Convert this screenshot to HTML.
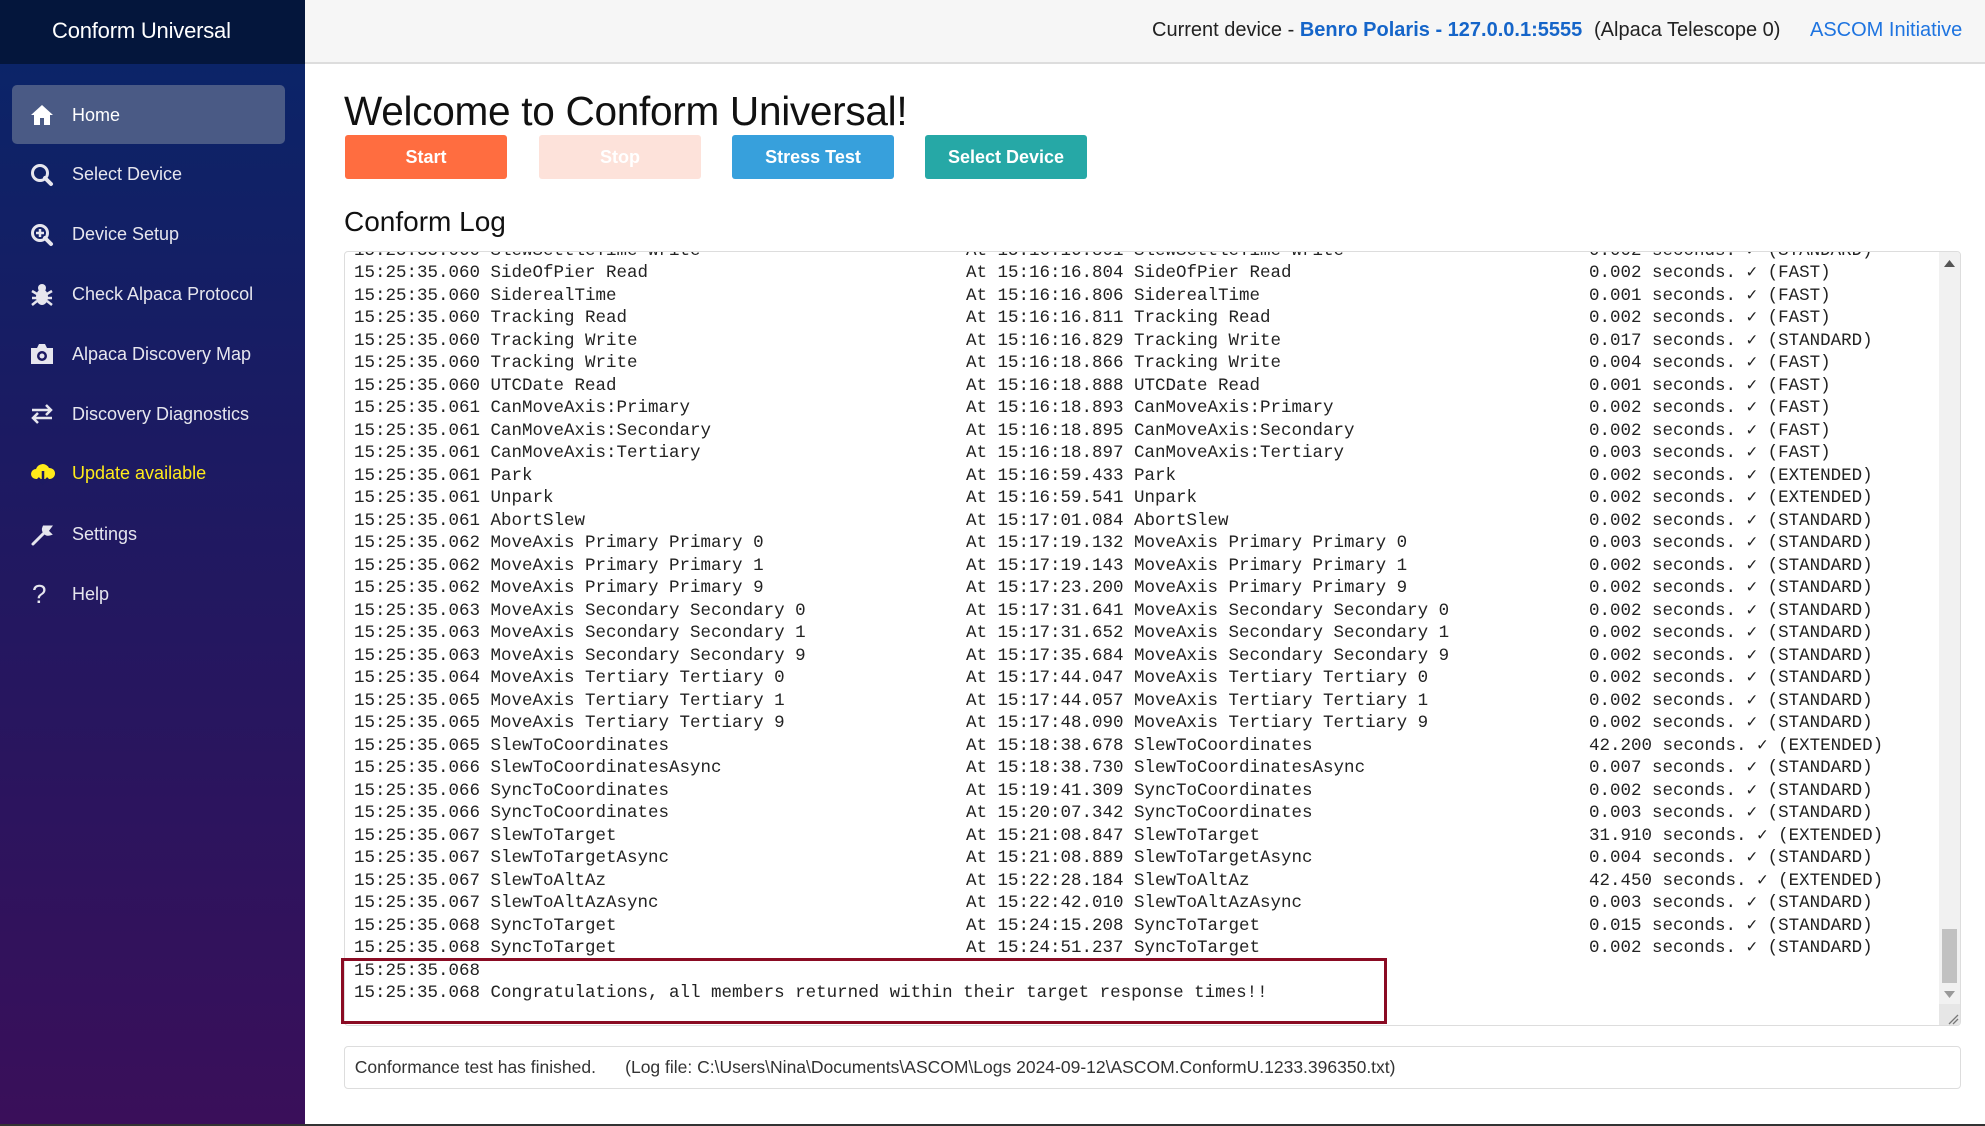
<!DOCTYPE html>
<html><head><meta charset="utf-8"><style>
*{margin:0;padding:0;box-sizing:border-box}
body{width:1985px;height:1126px;overflow:hidden;background:#fff;font-family:"Liberation Sans",Arial,sans-serif;position:relative}
#side{position:absolute;left:0;top:0;width:305px;height:1126px;background:linear-gradient(180deg,#0b2468 64px,#1c1a62 450px,#3a0f5a 1126px)}
#brand{height:64px;background:#04163c;color:#fff;font-size:22px;line-height:62px;padding-left:52px;letter-spacing:-0.2px}
.nav{position:absolute;left:12px;width:273px;height:59px;color:#e6e6ee;font-size:18px;line-height:61px;padding-left:60px;border-radius:5px}
.nav.act{background:#4a5a85;color:#fff}
.nav svg{position:absolute;left:18px;top:19px}
#hdr{position:absolute;left:305px;top:0;width:1680px;height:64px;background:#f6f6f6;border-bottom:2px solid #ddd;font-size:20px;color:#222}
#hdr span{position:absolute;top:19px;white-space:nowrap}
h1{position:absolute;left:344px;top:88px;font-size:40.6px;font-weight:normal;color:#111;letter-spacing:-0.3px}
.btn{position:absolute;top:135px;height:44px;width:162px;border-radius:3px;color:#fff;font-weight:bold;font-size:18px;text-align:center;line-height:44px}
h2{position:absolute;left:344px;top:206px;font-size:28px;font-weight:normal;color:#111}
#log{position:absolute;left:344px;top:251px;width:1617px;height:775px;border:1px solid #ddd;border-radius:4px;overflow:hidden;background:#fff}
#lines{position:absolute;left:0;top:-12px;font-family:"Liberation Mono",monospace;font-size:17.5px;color:#222}
.l{position:relative;height:22.49px;line-height:22.49px;white-space:pre}
.l span{position:absolute;top:0}
.a{left:9px}.b{left:621px}.c{left:1244px}
#sb{position:absolute;right:0;top:0;width:21px;height:775px;background:#f1f1f1}
#thumb{position:absolute;left:3px;top:677px;width:15px;height:54px;background:#c1c1c1}
#red{position:absolute;left:341px;top:958px;width:1046px;height:66px;border:3px solid #8a0b23}
#stat{position:absolute;left:344px;top:1046px;width:1617px;height:43px;border:1px solid #ddd;border-radius:4px;font-size:17.5px;color:#333;line-height:41px;white-space:pre}
</style></head><body>
<div id="side">
<div id="brand">Conform Universal</div>
<div class="nav act" style="top:85px"><svg width="24" height="22" viewBox="0 0 24 22"><path d="M12 1 L1 11 H4 V21 H10 V14 H14 V21 H20 V11 H23 Z" fill="#fff"/></svg>Home</div>
<div class="nav" style="top:144px"><svg width="24" height="24" viewBox="0 0 24 24"><circle cx="10" cy="10" r="7.5" stroke="#e6e6ee" stroke-width="3" fill="none"/><path d="M15 15 L21 21" stroke="#e6e6ee" stroke-width="4" stroke-linecap="round"/></svg>Select Device</div>
<div class="nav" style="top:204px"><svg width="24" height="24" viewBox="0 0 24 24"><circle cx="10" cy="10" r="7.5" stroke="#e6e6ee" stroke-width="3" fill="none"/><path d="M15 15 L21 21" stroke="#e6e6ee" stroke-width="4" stroke-linecap="round"/><path d="M10 6V14M6 10H14" stroke="#e6e6ee" stroke-width="2.5"/></svg>Device Setup</div>
<div class="nav" style="top:264px"><svg width="24" height="24" viewBox="0 0 24 24"><ellipse cx="12" cy="14" rx="6" ry="8" fill="#e6e6ee"/><circle cx="12" cy="5" r="4" fill="#e6e6ee"/><path d="M2 8L7 11M2 15H7M2 22L7 18M22 8L17 11M22 15H17M22 22L17 18" stroke="#e6e6ee" stroke-width="2.5"/></svg>Check Alpaca Protocol</div>
<div class="nav" style="top:324px"><svg width="24" height="22" viewBox="0 0 24 22"><path d="M1 5H7L9 1H15L17 5H23V21H1Z" fill="#e6e6ee"/><circle cx="12" cy="13" r="5" fill="#1c1a62"/><circle cx="12" cy="13" r="2.5" fill="#e6e6ee"/></svg>Alpaca Discovery Map</div>
<div class="nav" style="top:384px"><svg width="24" height="22" viewBox="0 0 24 22"><path d="M2 7H20M16 2L21 7L16 12M22 15H4M8 10L3 15L8 20" stroke="#e6e6ee" stroke-width="2.5" fill="none"/></svg>Discovery Diagnostics</div>
<div class="nav" style="top:443px;color:#ffeb1a"><svg width="26" height="24" viewBox="0 0 26 24"><path d="M6 17A5 5 0 0 1 6 7A7 7 0 0 1 19 6A5.5 5.5 0 0 1 20 17Z" fill="#ffeb1a"/><path d="M13 9V20M8 16L13 21L18 16" stroke="#1c1a62" stroke-width="2.5" fill="none"/></svg>Update available</div>
<div class="nav" style="top:504px"><svg width="24" height="24" viewBox="0 0 24 24"><path d="M3 21L13 11M14 4A5 5 0 0 0 20 11L17 8L20 4Z" stroke="#e6e6ee" stroke-width="3" fill="#e6e6ee" stroke-linecap="round"/></svg>Settings</div>
<div class="nav" style="top:564px"><span style="position:absolute;left:20px;top:0;font-size:26px;color:#e6e6ee">?</span>Help</div>
</div>
<div id="hdr">
<span style="left:847px">Current device - <b style="color:#1565c9">Benro Polaris - 127.0.0.1:5555</b></span>
<span style="left:1289px">(Alpaca Telescope 0)</span>
<span style="left:1505px;color:#1e74e0">ASCOM Initiative</span>
</div>
<h1>Welcome to Conform Universal!</h1>
<div class="btn" style="left:345px;background:#ff6d40">Start</div>
<div class="btn" style="left:539px;background:#fde2da">Stop</div>
<div class="btn" style="left:732px;background:#37a0dc">Stress Test</div>
<div class="btn" style="left:925px;background:#26a8a6">Select Device</div>
<h2>Conform Log</h2>
<div id="log"><div id="lines">
<div class="l"><span class="a">15:25:35.060 SlewSettleTime Write</span><span class="b">At 15:16:16.801 SlewSettleTime Write</span><span class="c">0.002 seconds. ✓ (STANDARD)</span></div>
<div class="l"><span class="a">15:25:35.060 SideOfPier Read</span><span class="b">At 15:16:16.804 SideOfPier Read</span><span class="c">0.002 seconds. ✓ (FAST)</span></div>
<div class="l"><span class="a">15:25:35.060 SiderealTime</span><span class="b">At 15:16:16.806 SiderealTime</span><span class="c">0.001 seconds. ✓ (FAST)</span></div>
<div class="l"><span class="a">15:25:35.060 Tracking Read</span><span class="b">At 15:16:16.811 Tracking Read</span><span class="c">0.002 seconds. ✓ (FAST)</span></div>
<div class="l"><span class="a">15:25:35.060 Tracking Write</span><span class="b">At 15:16:16.829 Tracking Write</span><span class="c">0.017 seconds. ✓ (STANDARD)</span></div>
<div class="l"><span class="a">15:25:35.060 Tracking Write</span><span class="b">At 15:16:18.866 Tracking Write</span><span class="c">0.004 seconds. ✓ (FAST)</span></div>
<div class="l"><span class="a">15:25:35.060 UTCDate Read</span><span class="b">At 15:16:18.888 UTCDate Read</span><span class="c">0.001 seconds. ✓ (FAST)</span></div>
<div class="l"><span class="a">15:25:35.061 CanMoveAxis:Primary</span><span class="b">At 15:16:18.893 CanMoveAxis:Primary</span><span class="c">0.002 seconds. ✓ (FAST)</span></div>
<div class="l"><span class="a">15:25:35.061 CanMoveAxis:Secondary</span><span class="b">At 15:16:18.895 CanMoveAxis:Secondary</span><span class="c">0.002 seconds. ✓ (FAST)</span></div>
<div class="l"><span class="a">15:25:35.061 CanMoveAxis:Tertiary</span><span class="b">At 15:16:18.897 CanMoveAxis:Tertiary</span><span class="c">0.003 seconds. ✓ (FAST)</span></div>
<div class="l"><span class="a">15:25:35.061 Park</span><span class="b">At 15:16:59.433 Park</span><span class="c">0.002 seconds. ✓ (EXTENDED)</span></div>
<div class="l"><span class="a">15:25:35.061 Unpark</span><span class="b">At 15:16:59.541 Unpark</span><span class="c">0.002 seconds. ✓ (EXTENDED)</span></div>
<div class="l"><span class="a">15:25:35.061 AbortSlew</span><span class="b">At 15:17:01.084 AbortSlew</span><span class="c">0.002 seconds. ✓ (STANDARD)</span></div>
<div class="l"><span class="a">15:25:35.062 MoveAxis Primary Primary 0</span><span class="b">At 15:17:19.132 MoveAxis Primary Primary 0</span><span class="c">0.003 seconds. ✓ (STANDARD)</span></div>
<div class="l"><span class="a">15:25:35.062 MoveAxis Primary Primary 1</span><span class="b">At 15:17:19.143 MoveAxis Primary Primary 1</span><span class="c">0.002 seconds. ✓ (STANDARD)</span></div>
<div class="l"><span class="a">15:25:35.062 MoveAxis Primary Primary 9</span><span class="b">At 15:17:23.200 MoveAxis Primary Primary 9</span><span class="c">0.002 seconds. ✓ (STANDARD)</span></div>
<div class="l"><span class="a">15:25:35.063 MoveAxis Secondary Secondary 0</span><span class="b">At 15:17:31.641 MoveAxis Secondary Secondary 0</span><span class="c">0.002 seconds. ✓ (STANDARD)</span></div>
<div class="l"><span class="a">15:25:35.063 MoveAxis Secondary Secondary 1</span><span class="b">At 15:17:31.652 MoveAxis Secondary Secondary 1</span><span class="c">0.002 seconds. ✓ (STANDARD)</span></div>
<div class="l"><span class="a">15:25:35.063 MoveAxis Secondary Secondary 9</span><span class="b">At 15:17:35.684 MoveAxis Secondary Secondary 9</span><span class="c">0.002 seconds. ✓ (STANDARD)</span></div>
<div class="l"><span class="a">15:25:35.064 MoveAxis Tertiary Tertiary 0</span><span class="b">At 15:17:44.047 MoveAxis Tertiary Tertiary 0</span><span class="c">0.002 seconds. ✓ (STANDARD)</span></div>
<div class="l"><span class="a">15:25:35.065 MoveAxis Tertiary Tertiary 1</span><span class="b">At 15:17:44.057 MoveAxis Tertiary Tertiary 1</span><span class="c">0.002 seconds. ✓ (STANDARD)</span></div>
<div class="l"><span class="a">15:25:35.065 MoveAxis Tertiary Tertiary 9</span><span class="b">At 15:17:48.090 MoveAxis Tertiary Tertiary 9</span><span class="c">0.002 seconds. ✓ (STANDARD)</span></div>
<div class="l"><span class="a">15:25:35.065 SlewToCoordinates</span><span class="b">At 15:18:38.678 SlewToCoordinates</span><span class="c">42.200 seconds. ✓ (EXTENDED)</span></div>
<div class="l"><span class="a">15:25:35.066 SlewToCoordinatesAsync</span><span class="b">At 15:18:38.730 SlewToCoordinatesAsync</span><span class="c">0.007 seconds. ✓ (STANDARD)</span></div>
<div class="l"><span class="a">15:25:35.066 SyncToCoordinates</span><span class="b">At 15:19:41.309 SyncToCoordinates</span><span class="c">0.002 seconds. ✓ (STANDARD)</span></div>
<div class="l"><span class="a">15:25:35.066 SyncToCoordinates</span><span class="b">At 15:20:07.342 SyncToCoordinates</span><span class="c">0.003 seconds. ✓ (STANDARD)</span></div>
<div class="l"><span class="a">15:25:35.067 SlewToTarget</span><span class="b">At 15:21:08.847 SlewToTarget</span><span class="c">31.910 seconds. ✓ (EXTENDED)</span></div>
<div class="l"><span class="a">15:25:35.067 SlewToTargetAsync</span><span class="b">At 15:21:08.889 SlewToTargetAsync</span><span class="c">0.004 seconds. ✓ (STANDARD)</span></div>
<div class="l"><span class="a">15:25:35.067 SlewToAltAz</span><span class="b">At 15:22:28.184 SlewToAltAz</span><span class="c">42.450 seconds. ✓ (EXTENDED)</span></div>
<div class="l"><span class="a">15:25:35.067 SlewToAltAzAsync</span><span class="b">At 15:22:42.010 SlewToAltAzAsync</span><span class="c">0.003 seconds. ✓ (STANDARD)</span></div>
<div class="l"><span class="a">15:25:35.068 SyncToTarget</span><span class="b">At 15:24:15.208 SyncToTarget</span><span class="c">0.015 seconds. ✓ (STANDARD)</span></div>
<div class="l"><span class="a">15:25:35.068 SyncToTarget</span><span class="b">At 15:24:51.237 SyncToTarget</span><span class="c">0.002 seconds. ✓ (STANDARD)</span></div>
<div class="l"><span class="a">15:25:35.068</span></div>
<div class="l"><span class="a">15:25:35.068 Congratulations, all members returned within their target response times!!</span></div>
</div>
<div id="sb"><div id="thumb"></div>
<svg style="position:absolute;left:5px;top:8px" width="11" height="7"><path d="M0 7L5.5 0L11 7Z" fill="#555"/></svg>
<svg style="position:absolute;left:5px;top:739px" width="11" height="7"><path d="M0 0L5.5 7L11 0Z" fill="#999"/></svg>
<div style="position:absolute;left:0;top:752px;width:21px;height:23px;background:#e6e6e6"></div>
<svg style="position:absolute;left:8px;top:761px" width="12" height="12"><path d="M2 11L11 2M6 11L11 6" stroke="#777" stroke-width="1.3"/></svg>
</div>
</div>
<div id="red"></div>
<div id="stat">  Conformance test has finished.      (Log file: C:\Users\Nina\Documents\ASCOM\Logs 2024-09-12\ASCOM.ConformU.1233.396350.txt)</div>
<div style="position:absolute;left:0;top:1124px;width:1985px;height:2px;background:#333"></div>
</body></html>
